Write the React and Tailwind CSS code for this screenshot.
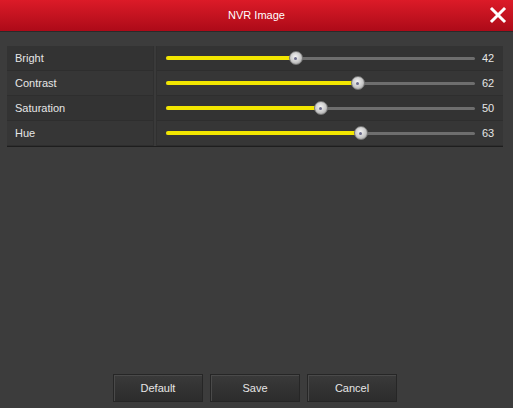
import React from "react";

const rows = [
  { label: "Bright", value: 42 },
  { label: "Contrast", value: 62 },
  { label: "Saturation", value: 50 },
  { label: "Hue", value: 63 },
];

function Slider({ value }) {
  return (
    <div className="flex items-center h-full pl-[9px] pr-[4px]">
      <div className="relative flex-1 h-[3px] bg-[#6e6e6e] rounded-full">
        <div
          className="absolute left-0 top-[-0.5px] h-[4px] bg-[#f2e600] rounded-full"
          style={{ width: `${value}%` }}
        />
        <div
          className="absolute top-1/2 w-[14px] h-[14px] -translate-x-1/2 -translate-y-1/2 rounded-full bg-[radial-gradient(circle_at_45%_40%,#f4f4f4_0%,#c8c8c8_55%,#8a8a8a_100%)] border border-[#777] flex items-center justify-center"
          style={{ left: `${value}%` }}
        >
          <div className="w-[3px] h-[3px] rounded-full bg-[#6a6a8a]" />
        </div>
      </div>
      <div className="w-[24px] pl-[7px] text-[11px] text-[#e6e6e6]">{value}</div>
    </div>
  );
}

export default function App() {
  return (
    <div
      className="w-[513px] h-[408px] bg-[#3c3c3c] flex flex-col overflow-hidden"
      style={{ fontFamily: '"Liberation Sans", Arial, sans-serif' }}
    >
      <div className="relative h-[32px] bg-gradient-to-b from-[#dc1b28] to-[#ad0a18] flex items-center justify-center border-b border-[#2a2a2a]">
        <span className="text-[11px] text-white">NVR Image</span>
        <span className="absolute right-[6px] top-[6px] text-white">
          <svg width="18" height="18" viewBox="0 0 18 18">
            <path d="M3 3 L15 15 M15 3 L3 15" stroke="white" strokeWidth="3" strokeLinecap="square" />
          </svg>
        </span>
      </div>
      <div className="flex-1 flex flex-col pl-[7px] pr-[10px] pt-[14px]">
        <div className="flex flex-col border-b border-[#1e1e1e]">
          {rows.map((r, i) => (
            <div key={r.label} className="flex h-[25px]">
              <div
                className={`w-[146px] flex items-center pl-[8px] text-[11px] text-[#e6e6e6] border-b border-[#2e2e2e] ${
                  i % 2 === 0 ? "bg-[#333333]" : "bg-[#363636]"
                }`}
              >
                {r.label}
              </div>
              <div className="w-[4px] bg-[#3a3a3a] border-x border-[#303030]" />
              <div
                className={`flex-1 border-b border-[#2e2e2e] ${
                  i % 2 === 0 ? "bg-[#333333]" : "bg-[#363636]"
                }`}
              >
                <Slider value={r.value} />
              </div>
            </div>
          ))}
        </div>
        <div className="flex-1" />
        <div className="flex justify-center gap-[7px] mb-[6px]">
          {["Default", "Save", "Cancel"].map((b) => (
            <div
              key={b}
              className="w-[90px] h-[28px] flex items-center justify-center text-[11px] text-[#e6e6e6] bg-gradient-to-b from-[#3a3a3a] to-[#2c2c2c] border border-[#262626] shadow-[inset_1px_1px_0_#4a4a4a]"
            >
              {b}
            </div>
          ))}
        </div>
      </div>
    </div>
  );
}
